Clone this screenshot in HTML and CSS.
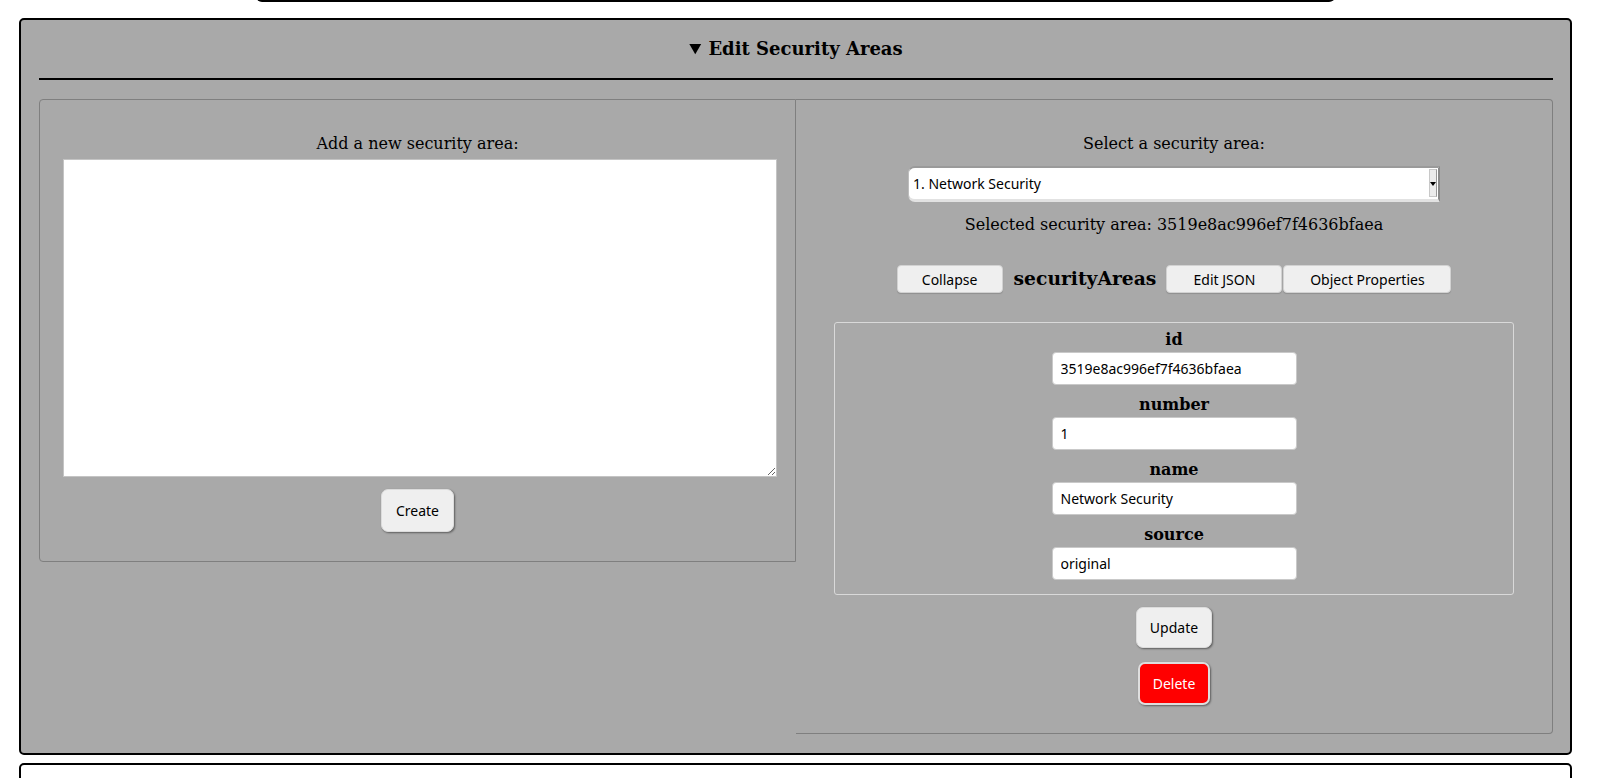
FILE: index.html
```html
<!DOCTYPE html>
<html lang="en">
<head>
<meta charset="utf-8">
<title>Edit Security Areas</title>
<link rel="stylesheet" href="styles.css">
</head>
<body>
<div class="prev-box"></div>

<details class="section" open>
  <summary class="section-title">Edit Security Areas</summary>
  <div class="panels">
    <div class="panel panel-left">
      <div class="label">Add a new security area:</div>
      <textarea class="new-area"></textarea>
      <div class="center">
        <button class="btn btn-big">Create</button>
      </div>
    </div>
    <div class="panel panel-right">
      <div class="label">Select a security area:</div>
      <div class="select-wrap">
        <select class="area-select">
          <option>1. Network Security</option>
        </select>
        <span class="select-arrow"></span>
      </div>
      <div class="label selected">Selected security area: 3519e8ac996ef7f4636bfaea</div>
      <div class="toolbar">
        <button class="btn btn-small btn-collapse">Collapse</button>
        <span class="obj-name">securityAreas</span>
        <button class="btn btn-small btn-json">Edit JSON</button>
        <button class="btn btn-small btn-props">Object Properties</button>
      </div>
      <div class="props">
        <div class="field">
          <div class="field-label">id</div>
          <input class="field-input" type="text" value="3519e8ac996ef7f4636bfaea">
        </div>
        <div class="field">
          <div class="field-label">number</div>
          <input class="field-input" type="text" value="1">
        </div>
        <div class="field">
          <div class="field-label">name</div>
          <input class="field-input" type="text" value="Network Security">
        </div>
        <div class="field">
          <div class="field-label">source</div>
          <input class="field-input" type="text" value="original">
        </div>
      </div>
      <div class="center">
        <button class="btn btn-big btn-update">Update</button>
      </div>
      <div class="center">
        <button class="btn btn-big btn-delete">Delete</button>
      </div>
    </div>
  </div>
</details>

<div class="next-box"></div>
</body>
</html>
```

FILE: styles.css
```css
html, body {
  margin: 0;
  padding: 0;
  background: #ffffff;
  overflow: hidden;
}

body {
  font-family: "DejaVu Serif", serif;
  font-size: 16px;
  color: #000;
  height: 778px;
}

.prev-box {
  margin-left: 256px;
  width: 1079px;
  height: 12px;
  margin-top: -10px;
  box-sizing: border-box;
  border: 2px solid #000;
  border-top: none;
  border-radius: 0 0 6px 6px;
}

.section {
  display: block;
  margin: 16px 0 0 19px;
  width: 1553px;
  box-sizing: border-box;
  border: 2px solid #000;
  border-radius: 5px;
  background: #a9a9a9;
  padding: 0 17px 19px 18px;
}

.section-title {
  font-family: "DejaVu Serif", serif;
  font-weight: bold;
  font-size: 18px;
  line-height: 22px;
  text-align: center;
  padding: 18px 0 18px;
  border-bottom: 2px solid #000;
  cursor: pointer;
}

.panels {
  display: flex;
  align-items: flex-start;
  margin-top: 19px;
}

.panel {
  width: 757px;
  box-sizing: border-box;
  border: 1px solid #7f7f7f;
  padding-top: 34px;
}

.panel-left {
  border-radius: 4px 0 0 4px;
  padding-bottom: 29px;
}

.panel-right {
  border-left: none;
  border-radius: 0 4px 4px 0;
  padding-bottom: 28px;
}

.label {
  text-align: center;
  line-height: 19px;
  font-size: 16px;
}

.center {
  text-align: center;
}

.new-area {
  display: block;
  box-sizing: border-box;
  width: 714px;
  height: 318px;
  margin: 6px 0 0 23px;
  border: 1px solid #c4c4c4;
  background: #fff;
  padding: 2px;
}

.btn {
  font-family: "Noto Sans", "Open Sans", sans-serif;
  font-size: 14px;
  color: #000;
  background: #efefef;
  cursor: pointer;
}

.btn-big {
  margin-top: 12px;
  height: 43px;
  padding: 0 14px;
  border: 1px solid #dcdcdc;
  border-radius: 7px;
  box-shadow: 1px 1px 2px rgba(0, 0, 0, 0.45);
}

.btn-update {
  height: 41px;
  padding: 0 13px;
}

.btn-delete {
  margin-top: 14px;
  background: #ff0000;
  color: #fff;
  border: 2px solid #dedede;
  padding: 0 13px;
}

.select-wrap {
  position: relative;
  width: 532px;
  height: 36px;
  margin: 13px auto 0;
}

.area-select {
  -webkit-appearance: none;
  appearance: none;
  display: block;
  width: 532px;
  height: 36px;
  box-sizing: border-box;
  margin: 0;
  padding: 0 0 0 4px;
  font-family: "Noto Sans", "Open Sans", sans-serif;
  font-size: 14px;
  color: #000;
  background: #fff;
  border-style: solid;
  border-width: 2px 2px 3px 1px;
  border-color: #9a9a9a #8a8a8a #e2e2e2 #bdbdbd;
  border-radius: 7px 0 0 7px;
  outline: none;
}

.select-arrow {
  position: absolute;
  right: 3px;
  top: 3px;
  width: 8px;
  height: 28px;
  box-sizing: border-box;
  background: #ececec;
  border: 1px solid #c8c8c8;
  border-right-color: #9a9a9a;
}

.select-arrow::after {
  content: "";
  position: absolute;
  left: 0;
  top: 12px;
  border-left: 3px solid transparent;
  border-right: 3px solid transparent;
  border-top: 4px solid #000;
}

.selected {
  margin-top: 13px;
}

.toolbar {
  display: flex;
  justify-content: center;
  align-items: center;
  height: 28px;
  margin-top: 31px;
}

.btn-small {
  height: 28px;
  padding: 0;
  border: 1px solid #d2d2d2;
  border-radius: 4px;
  box-shadow: 0 1px 1px rgba(0, 0, 0, 0.15);
}

.btn-collapse {
  width: 106px;
}

.btn-json {
  width: 116px;
}

.btn-props {
  width: 168px;
  margin-left: 1px;
}

.obj-name {
  font-family: "DejaVu Serif", serif;
  font-weight: bold;
  font-size: 18.72px;
  line-height: 22px;
  margin: 0 10px 0 11px;
  position: relative;
  top: -1px;
}

.props {
  width: 680px;
  box-sizing: border-box;
  margin: 29px auto 0;
  border: 1px solid #d9d9d9;
  border-radius: 3px;
  padding: 7px 0 14px;
}

.field {
  display: flex;
  flex-direction: column;
  align-items: center;
}

.field + .field {
  margin-top: 10px;
}

.field-label {
  font-family: "DejaVu Serif", serif;
  font-weight: bold;
  font-size: 16px;
  line-height: 20px;
}

.field-input {
  margin-top: 2px;
  width: 245px;
  height: 33px;
  box-sizing: border-box;
  border: 1px solid #c9c9c9;
  border-radius: 4px;
  background: #fff;
  padding: 0 8px;
  font-family: "Noto Sans", "Open Sans", sans-serif;
  font-size: 14px;
  color: #000;
}

.next-box {
  margin: 8px 0 0 19px;
  width: 1553px;
  height: 60px;
  box-sizing: border-box;
  border: 2px solid #000;
  border-radius: 5px;
}
```
